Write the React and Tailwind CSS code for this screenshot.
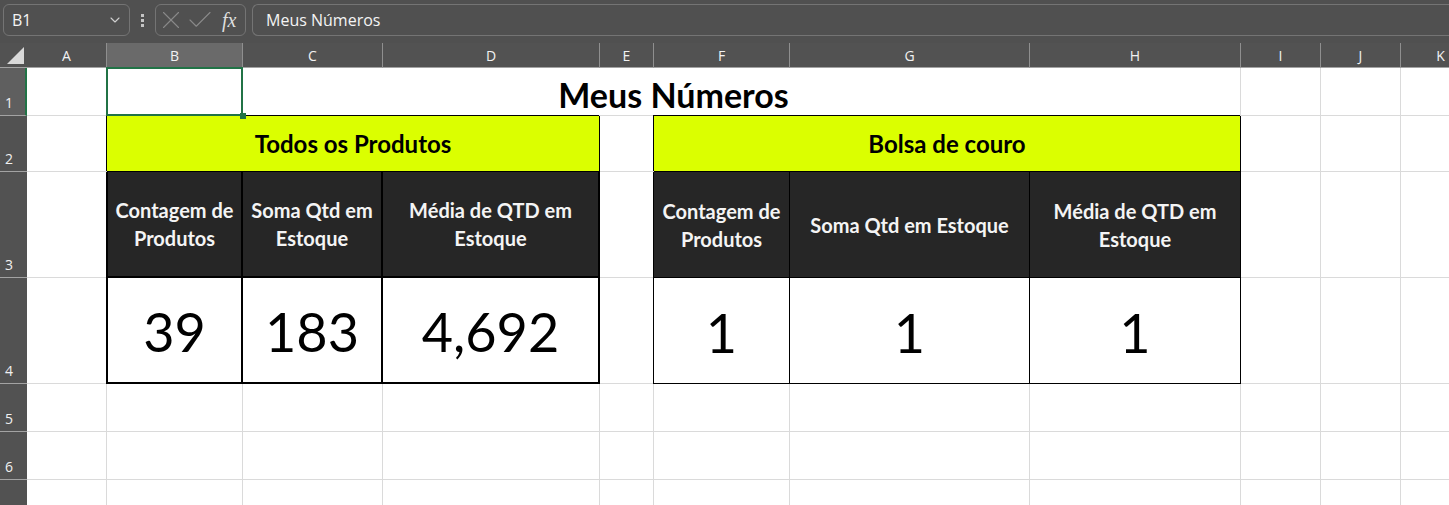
import { Check, ChevronDown, X } from "lucide-react";

// Planilha estilo Excel (modo escuro na barra) — "Meus Números"

const COLS = ["A", "B", "C", "D", "E", "F", "G", "H", "I", "J", "K"];

const grid = "border-r border-b border-[#dadada]";

function FormulaBar() {
  return (
    <div className="flex h-[43px] items-start bg-[#505050] pt-[4px] pl-[3px] font-['Open_Sans',sans-serif]">
      <div className="flex h-[32px] w-[127px] items-center justify-between rounded-[6px] border border-[#747474] pl-[8px] pr-[6px] text-[16px] text-[#f4f4f4]">
        <span>B1</span>
        <ChevronDown size={16} strokeWidth={1.6} className="text-[#d0d0d0]" />
      </div>
      <div className="flex h-[32px] w-[25px] flex-col items-center justify-center gap-[2px]">
        <span className="h-[3px] w-[3px] bg-[#c4c4c4]" />
        <span className="h-[3px] w-[3px] bg-[#c4c4c4]" />
        <span className="h-[3px] w-[3px] bg-[#c4c4c4]" />
      </div>
      <div className="flex h-[32px] w-[91px] items-center rounded-[6px] border border-[#747474]">
        <X size={30} strokeWidth={0.9} className="text-[#8a8a8a]" />
        <Check size={30} strokeWidth={0.9} className="-ml-px text-[#8a8a8a]" />
        <span className="ml-[7px] font-['Liberation_Serif',serif] text-[20px] italic leading-none text-[#dedede]">fx</span>
      </div>
      <div className="ml-[6px] flex h-[32px] flex-1 items-center rounded-l-[6px] border border-r-0 border-[#747474] pl-[13px] text-[16px] text-[#f4f4f4]">
        Meus Números
      </div>
    </div>
  );
}

function RowHead({ n, active }) {
  return (
    <div
      className={
        active
          ? "flex items-end border-b border-[#a3a3a3] border-r-2 border-r-[#217346] bg-[#5f5f5f] pb-[5px] pl-[5px] text-[14px] leading-none text-[#f0f0f0] font-['Open_Sans',sans-serif]"
          : "flex items-end border-b border-[#a3a3a3] bg-[#525252] pb-[5px] pl-[5px] text-[14px] leading-none text-[#f0f0f0] font-['Open_Sans',sans-serif]"
      }
    >
      {n}
    </div>
  );
}

function Blank() {
  return <div className={grid} />;
}

function Head({ children, first }) {
  return (
    <div
      className={
        first
          ? "flex items-center justify-center bg-[#262626] border-r-2 border-b-2 border-l border-black shadow-[-1px_0_0_#000] px-1 text-center text-[20px] font-bold leading-[28px] text-[#f4f4f4]"
          : "flex items-center justify-center bg-[#262626] border-r-2 border-b-2 border-black px-1 text-center text-[20px] font-bold leading-[28px] text-[#f4f4f4]"
      }
    >
      {children}
    </div>
  );
}

function HeadThin({ children, first }) {
  return (
    <div
      className={
        first
          ? "flex items-center justify-center bg-[#262626] border-r border-b border-black shadow-[-1px_0_0_#000] px-1 text-center text-[20px] font-bold leading-[28px] text-[#f4f4f4]"
          : "flex items-center justify-center bg-[#262626] border-r border-b border-black px-1 text-center text-[20px] font-bold leading-[28px] text-[#f4f4f4]"
      }
    >
      {children}
    </div>
  );
}

function Num({ children, first }) {
  return (
    <div
      className={
        first
          ? "flex items-center justify-center bg-white border-r-2 border-b-2 border-l border-black shadow-[-1px_0_0_#000] pt-1 text-[54px] leading-none text-black"
          : "flex items-center justify-center bg-white border-r-2 border-b-2 border-black pt-1 text-[54px] leading-none text-black"
      }
    >
      {children}
    </div>
  );
}

function NumThin({ children, first }) {
  return (
    <div
      className={
        first
          ? "flex items-center justify-center bg-white border-r border-b border-black shadow-[-1px_0_0_#000] pt-1 text-[54px] leading-none text-black"
          : "flex items-center justify-center bg-white border-r border-b border-black pt-1 text-[54px] leading-none text-black"
      }
    >
      {children}
    </div>
  );
}

function Sheet() {
  return (
    <div className="grid grid-cols-[27px_80px_136px_140px_217px_54px_136px_240px_211px_80px_80px_80px] grid-rows-[25px_48px_56px_106px_106px_48px_48px_48px] font-['Lato',sans-serif]">
      {/* cabeçalho de colunas */}
      <div className="relative border-b border-[#a3a3a3] bg-[#525252]">
        <div className="absolute bottom-[3px] right-[3px] h-0 w-0 border-b-[17px] border-l-[17px] border-b-[#d9d9d9] border-l-transparent" />
      </div>
      {COLS.map((c) => (
        <div
          key={c}
          className={
            c === "B"
              ? "flex items-center justify-center border-b border-[#a3a3a3] border-r border-r-[#8f8f8f] bg-[#6a6a6a] font-['Open_Sans',sans-serif] text-[14px] text-[#f2f2f2]"
              : "flex items-center justify-center border-b border-[#a3a3a3] border-r border-r-[#8f8f8f] bg-[#525252] font-['Open_Sans',sans-serif] text-[14px] text-[#f2f2f2]"
          }
        >
          {c}
        </div>
      ))}

      {/* linha 1 */}
      <RowHead n="1" active />
      <Blank />
      <div className={`relative z-10 ${grid}`}>
        <div className="absolute -left-px -top-px -right-px -bottom-px border-2 border-[#217346]" />
        <div className="absolute -bottom-[4px] -right-[4px] h-[6px] w-[6px] bg-[#217346]" />
      </div>
      <div className="col-span-6 flex items-end justify-center border-r border-b border-[#dadada] pr-[136px] pb-[3px]">
        <span className="text-[34px] font-bold leading-none text-black">Meus Números</span>
      </div>
      <Blank />
      <Blank />
      <Blank />

      {/* linha 2 */}
      <RowHead n="2" />
      <Blank />
      <div className="col-span-3 flex items-center justify-center bg-[#dbff00] border-r border-b border-black shadow-[-1px_-1px_0_#000] text-[24px] font-bold text-black">
        Todos os Produtos
      </div>
      <Blank />
      <div className="col-span-3 flex items-center justify-center bg-[#dbff00] border-r border-b border-black shadow-[-1px_-1px_0_#000] text-[24px] font-bold text-black">
        Bolsa de couro
      </div>
      <Blank />
      <Blank />
      <Blank />

      {/* linha 3 */}
      <RowHead n="3" />
      <Blank />
      <Head first>Contagem de Produtos</Head>
      <Head>Soma Qtd em Estoque</Head>
      <Head>Média de QTD em Estoque</Head>
      <Blank />
      <HeadThin first>Contagem de Produtos</HeadThin>
      <HeadThin>Soma Qtd em Estoque</HeadThin>
      <HeadThin>Média de QTD em Estoque</HeadThin>
      <Blank />
      <Blank />
      <Blank />

      {/* linha 4 */}
      <RowHead n="4" />
      <Blank />
      <Num first>39</Num>
      <Num>183</Num>
      <Num>4,692</Num>
      <Blank />
      <NumThin first>1</NumThin>
      <NumThin>1</NumThin>
      <NumThin>1</NumThin>
      <Blank />
      <Blank />
      <Blank />

      {/* linhas vazias (a 7 fica fora da janela) */}
      {["5", "6", ""].map((n, i) => (
        <div key={i} className="contents">
          <RowHead n={n} />
          {COLS.map((c) => (
            <Blank key={c} />
          ))}
        </div>
      ))}
    </div>
  );
}

export default function App() {
  return (
    <div className="h-[505px] w-[1449px] overflow-hidden bg-white">
      <FormulaBar />
      <Sheet />
    </div>
  );
}
